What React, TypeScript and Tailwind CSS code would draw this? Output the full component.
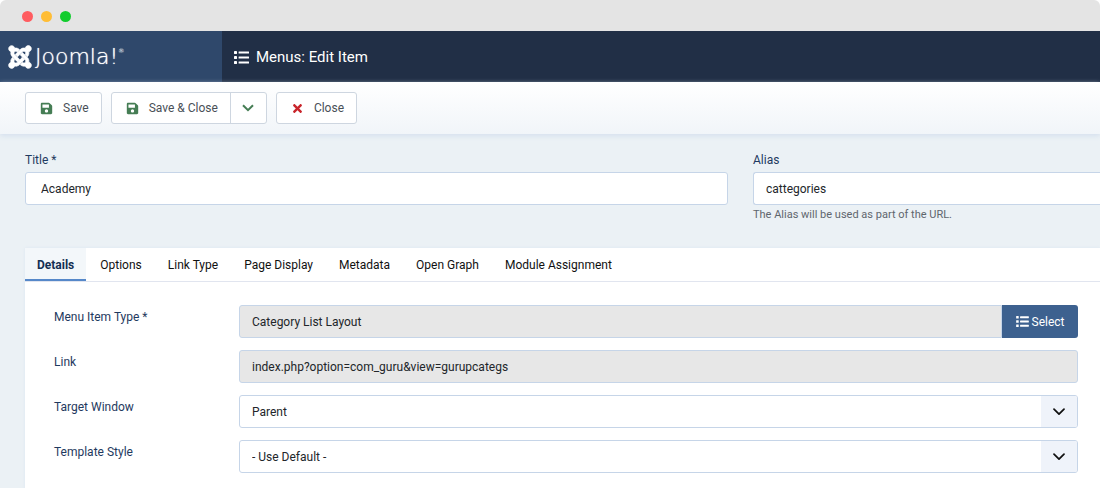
import { useState } from "react";
import { FaJoomla, FaSave, FaTimes } from "react-icons/fa";

const tabs = ["Details", "Options", "Link Type", "Page Display", "Metadata", "Open Graph", "Module Assignment"];

const buttonClass = "flex items-center gap-2.5 pl-3.5 pr-3 text-[12px] text-[#495057]";
const fieldClass = "h-[33px] w-full border border-[#c6d5e8] px-3 text-[12px] text-[#22262a] focus:outline-none";
const labelClass = "text-[12px] leading-5 text-[#1f3a60]";

function ListIcon({ className }: { className: string }) {
  return (
    <svg viewBox="0 0 15 13" className={className} fill="currentColor" aria-hidden="true">
      {[0, 5, 10].map((y) => (
        <g key={y}>
          <rect x="0" y={y} width="3" height="3" rx="0.4" />
          <rect x="4.6" y={y + 0.4} width="10.4" height="2.2" rx="0.4" />
        </g>
      ))}
    </svg>
  );
}

function SelectField({ id, label, options }: { id: string; label: string; options: string[] }) {
  return (
    <div className="flex">
      <label htmlFor={id} className={`${labelClass} w-[185px] shrink-0 pt-0.5`}>
        {label}
      </label>
      <div className="relative flex-1">
        <select id={id} className={`${fieldClass} appearance-none rounded-[3px] bg-white pr-12`}>
          {options.map((option) => (
            <option key={option}>{option}</option>
          ))}
        </select>
        <span className="pointer-events-none absolute inset-y-px right-px flex w-9 items-center justify-center rounded-r-[2px] bg-[#eff3fa]">
          <svg viewBox="0 0 12 8" className="h-2 w-3" fill="none" stroke="#111" strokeWidth="1.7">
            <path d="M1 1.2 6 6.2 11 1.2" strokeLinecap="round" strokeLinejoin="round" />
          </svg>
        </span>
      </div>
    </div>
  );
}

export default function App() {
  const [activeTab, setActiveTab] = useState("Details");
  const [title, setTitle] = useState("Academy");
  const [alias, setAlias] = useState("cattegories");

  return (
    <div className="flex min-h-screen flex-col overflow-x-hidden bg-[#ebf1f5] font-['Roboto',sans-serif]">
      <div className="bg-white">
        <div className="flex h-[31px] items-center gap-2 rounded-t-md bg-[#e4e4e4] pt-px pl-[22px]">
          <span className="size-[11px] rounded-full bg-[#ff5c60]" />
          <span className="size-[11px] rounded-full bg-[#ffbd35]" />
          <span className="size-[11px] rounded-full bg-[#12cc2e]" />
        </div>
      </div>

      <header className="flex h-[51px] bg-[#212f46] text-white">
        <a href="#" className="flex w-[222px] shrink-0 items-center gap-0.5 bg-[#2f486b] pl-[7px]">
          <FaJoomla size={26} stroke="currentColor" strokeWidth={14} />
          <span className="flex items-start font-['DejaVu_Sans',sans-serif] text-[22px] leading-6 font-extralight text-shadow-[0_0_1px_#fff]">
            Joomla!
            <span className="text-[6px] leading-3">®</span>
          </span>
        </a>
        <h1 className="flex items-center gap-[7px] pt-px pl-3 text-[15px]">
          <ListIcon className="h-[13px] w-[15px]" />
          Menus: Edit Item
        </h1>
      </header>

      <div className="flex h-[52px] items-center gap-[9px] bg-linear-to-b from-white to-[#f1f5f9] pl-[25px] shadow-[0_2px_5px_#d5e0ee]">
        <button className={`${buttonClass} h-8 rounded-[3px] border border-[#ced6e0] bg-white`}>
          <FaSave size={13} className="text-[#457d54]" />
          Save
        </button>
        <div className="flex h-8 rounded-[3px] border border-[#ced6e0] bg-white">
          <button className={buttonClass}>
            <FaSave size={13} className="text-[#457d54]" />
            Save &amp; Close
          </button>
          <button aria-label="More save options" className="flex w-9 items-center justify-center border-l border-[#ced6e0] text-[#457d54]">
            <svg viewBox="0 0 12 8" className="h-2 w-3" fill="none" stroke="currentColor" strokeWidth="2">
              <path d="M1 1.2 6 6.2 11 1.2" />
            </svg>
          </button>
        </div>
        <button className={`${buttonClass} h-8 rounded-[3px] border border-[#ced6e0] bg-white`}>
          <FaTimes size={13} className="text-[#c9252b]" />
          Close
        </button>
      </div>

      <main className="flex flex-1 flex-col pt-4 pl-[25px]">
        <div className="grid grid-cols-[703fr_347fr] gap-[25px]">
          <div>
            <label htmlFor="title" className={`${labelClass} block pb-0.5`}>Title *</label>
            <input
              id="title"
              className={`${fieldClass} rounded-[3px] bg-white pl-[15px]`}
              value={title}
              onChange={(e) => setTitle(e.target.value)}
            />
          </div>
          <div>
            <label htmlFor="alias" className={`${labelClass} block pb-0.5`}>Alias</label>
            <input
              id="alias"
              className={`${fieldClass} rounded-l-[3px] border-r-0 bg-white`}
              value={alias}
              onChange={(e) => setAlias(e.target.value)}
            />
            <p className="text-[11px] leading-5 text-[#5f666d]">The Alias will be used as part of the URL.</p>
          </div>
        </div>

        <section className="mt-[23px] flex-1 bg-white shadow-[0_0_3px_#dde6f2]">
          <div role="tablist" className="flex h-[34px] gap-0.5 border-b border-[#e1e5ef]">
            {tabs.map((tab) => (
              <button
                key={tab}
                role="tab"
                aria-selected={tab === activeTab}
                onClick={() => setActiveTab(tab)}
                className={
                  tab === activeTab
                    ? "border-b-2 border-[#5688c9] bg-[#f3f7fa] px-3 pt-0.5 text-[12px] font-bold text-[#132f53]"
                    : "border-b-2 border-transparent px-3 pt-0.5 text-[12px] text-[#111]"
                }
              >
                {tab}
              </button>
            ))}
          </div>

          <div className="flex flex-col gap-3 pt-[23px] pr-[22px] pb-4 pl-[29px]">
            <div className="flex">
              <label htmlFor="type" className={`${labelClass} w-[185px] shrink-0 pt-0.5`}>Menu Item Type *</label>
              <div className="flex flex-1">
                <input id="type" readOnly value="Category List Layout" className={`${fieldClass} rounded-l-[3px] bg-[#e7e7e7]`} />
                <button className="flex w-[76px] shrink-0 items-center justify-center gap-[3px] rounded-r-[3px] bg-[#3d618f] text-[12px] text-white">
                  <ListIcon className="h-[11px] w-[13px]" />
                  Select
                </button>
              </div>
            </div>
            <div className="flex">
              <label htmlFor="link" className={`${labelClass} w-[185px] shrink-0 pt-0.5`}>Link</label>
              <input
                id="link"
                readOnly
                value="index.php?option=com_guru&view=gurupcategs"
                className={`${fieldClass} flex-1 rounded-[3px] bg-[#e7e7e7]`}
              />
            </div>
            <SelectField id="target" label="Target Window" options={["Parent", "New Window With Navigation", "New Without Navigation"]} />
            <SelectField id="template" label="Template Style" options={["- Use Default -"]} />
          </div>
        </section>
      </main>
    </div>
  );
}
